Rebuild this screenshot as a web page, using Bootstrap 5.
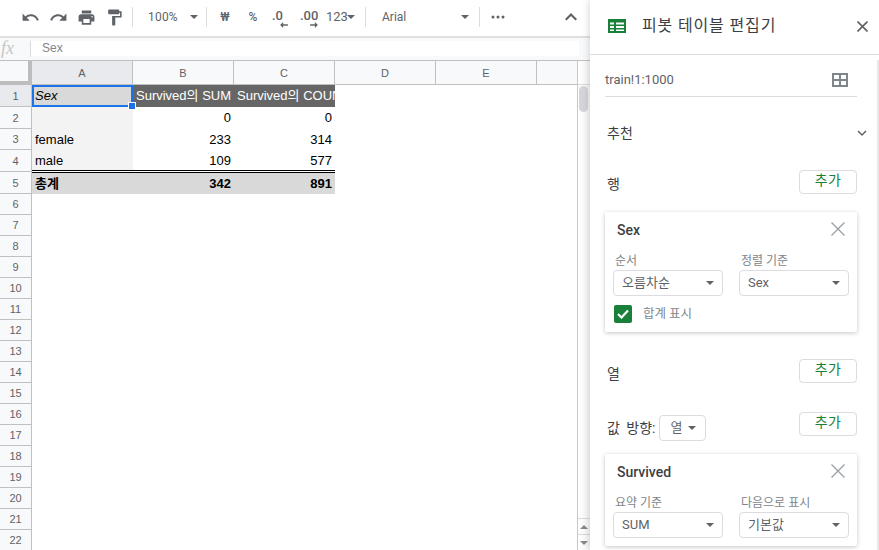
<!DOCTYPE html>
<html lang="ko">
<head>
    <meta charset="UTF-8">
    <meta name="viewport" content="width=device-width, initial-scale=1.0">
    <title>피봇 테이블 편집기</title>
    <link href="https://cdn.jsdelivr.net/npm/bootstrap@5.3.0/dist/css/bootstrap.min.css" rel="stylesheet">
    <style>
        html, body { height: 550px; overflow: hidden; }
        body { font-family: Roboto, "Noto Sans CJK KR", sans-serif; background: #fff; color: #3c4043; }

        /* left side: toolbar, formula bar, grid */
        .sheet-side { width: 590px; height: 550px; position: relative; flex: none; }
        .tool-bar { height: 38px; border-bottom: 2px solid #e0e0e0; padding: 0 0 2px 20px; font-size: 12px; color: #5f6368; }
        .tool-bar svg { fill: #5f6368; display: block; }
        .tool-btn { width: 28px; display: flex; justify-content: center; }
        .tool-sep { width: 1px; height: 20px; background: #dadce0; flex: none; }
        .caret-down { width: 0; height: 0; border-left: 4px solid transparent; border-right: 4px solid transparent; border-top: 4px solid #5f6368; flex: none; }
        .zoom-val { width: 57px; padding-left: 15px; letter-spacing: .2px; }
        .money-val { width: 26px; text-align: center; font-weight: 500; }
        .dec-btn { font-size: 13px; line-height: 18px; position: relative; height: 20px; }
        .num-fmt { width: 21px; font-size: 13px; }
        .font-name { width: 95px; padding-left: 16px; }
        .hide-up { position: absolute; left: 565px; top: 13px; }

        .formula-bar { height: 23px; background: #f8f9fa; padding: 3px 11px 3px 0; border-bottom: 1px solid #c0c0c0; }
        .fx-mark { width: 31px; padding-left: 1px; font-family: "Liberation Serif", serif; font-style: italic; font-size: 18px; line-height: 15px; color: #c4c7c5; border-right: 1px solid #dadce0; height: 16px; flex: none; }
        .formula-text { background: #fff; flex-grow: 1; height: 15px; padding-left: 11px; font-family: "Liberation Sans", sans-serif; font-size: 12px; line-height: 15px; color: #80868b; }

        .grid-wrap { width: 577px; height: 489px; overflow: hidden; position: relative; }
        .sheet-grid { table-layout: fixed; width: 600px; border-collapse: separate; border-spacing: 0; font-family: "Liberation Sans", "Noto Sans CJK KR", sans-serif; font-size: 13px; color: #000; }
        .sheet-grid th, .sheet-grid td { padding: 0 3px; white-space: nowrap; overflow: hidden; line-height: 16px; }
        .sheet-grid thead th { height: 24px; background: #f8f9fa; border-right: 1px solid #c0c0c0; border-bottom: 1px solid #c0c0c0; font-size: 11px; font-weight: 400; color: #5f6368; text-align: center; }
        .sheet-grid tbody th { background: #f8f9fa; border-right: 1px solid #c0c0c0; border-bottom: 1px solid #c0c0c0; font-size: 11px; font-weight: 400; color: #5f6368; text-align: center; padding: 0; }
        .sheet-grid tbody tr { height: 21px; }
        .sheet-grid tbody tr.tall-row { height: 22px; }
        .sheet-grid thead th.corner-cell { background: #f8f9fa; border-right: 4px solid #bdbdbd; border-bottom: 4px solid #bdbdbd; }
        .sheet-grid thead th.col-on, .sheet-grid tbody th.row-on { background: #e8eaed; }
        .pivot-head { background: #666; color: #fff; }
        .pivot-side { background: #f3f3f3; }
        .pivot-sel { background: #d9d9d9; font-style: italic; outline: 2px solid #1a73e8; outline-offset: -2px; }
        /* 총계 위 이중선: 4행 아래 + 5행 위 */
        .pivot-above td { box-shadow: inset 0 -1px #fff, inset 0 -2px #000; }
        .pivot-total td { background: #d9d9d9; font-weight: 700; border-top: 1px solid #000; }
        .sel-handle { position: absolute; left: 128px; top: 41px; width: 6px; height: 6px; background: #1a73e8; border: 1px solid #fff; box-sizing: content-box; }

        .v-scroll { position: absolute; right: 0; top: 61px; width: 13px; height: 489px; background: linear-gradient(90deg, #fff, #f4f4f4); border-left: 1px solid #c8c8c8; }
        .v-top { height: 24px; border-bottom: 1px solid #d8d8d8; }
        .v-thumb { width: 9px; height: 26px; margin: 1px 0 0 1px; background: #d3d5da; border-radius: 5px; }
        .v-end { height: 16px; border-top: 1px solid #d8d8d8; display: flex; align-items: center; justify-content: center; }
        .caret-up { width: 0; height: 0; border-left: 4px solid transparent; border-right: 4px solid transparent; border-bottom: 4px solid #888; }
        .v-end .caret-down { border-top-color: #888; }

        /* right side: pivot editor */
        .pivot-panel { width: 289px; height: 550px; flex: none; position: relative; box-shadow: -2px 0 6px rgba(0, 0, 0, .12); background: #fff; }
        .panel-head { height: 55px; border-bottom: 1px solid #dadce0; padding: 0 0 2px 18px; }
        .panel-title { font-size: 16px; letter-spacing: .85px; color: #3c4043; margin-left: 16px; }
        .panel-close { position: absolute; left: 267px; top: 21px; }
        .panel-body { padding: 0 22px 0 15px; height: 495px; overflow: hidden; }
        .panel-rail { position: absolute; right: 0; top: 60px; width: 2px; height: 490px; background: #e8e8e8; }
        .range-row { height: 42px; margin-bottom: 24px; padding: 9px 9px 0 0; border-bottom: 1px solid #dadce0; font-size: 13px; color: #5f6368; }
        .sect-title { font-size: 14px; color: #3c4043; padding-left: 2px; }
        .sect-head { height: 24px; margin-bottom: 25px; }
        .dir-label { word-spacing: 3px; }
        .btn.add-btn { width: 58px; height: 24px; padding: 0 0 4px; font-size: 14px; line-height: 17px; letter-spacing: .4px; color: #188038; background: #fff; border: 1px solid #dadce0; border-radius: 4px; }
        .pivot-card { border: 0; border-radius: 2px; box-shadow: 0 1px 4px rgba(60, 64, 67, .3); padding: 8px 8px 0; }
        .card-name { font-size: 14px; font-weight: 500; color: #3c4043; padding-left: 4px; height: 22px; line-height: 21px; }
        .card-x { margin: 0 4px 4px 0; }
        .field-label { font-size: 12px; color: #80868b; line-height: 14px; margin-top: 12px; margin-bottom: 2px; padding-left: 2px; }
        .sel-box { height: 26px; border: 1px solid #dadce0; border-radius: 4px; font-size: 13px; padding: 0 8px; color: #5f6368; background: #fff; }
        .sel-wide { width: 110px; }
        .sel-small { width: 47px; margin-left: 3px; margin-top: 3px; padding: 0 9px 0 11px; }
        .gap-fields { gap: 16px; }
        .check-row { margin-top: 9px; }
        .check-mark { width: 18px; height: 18px; background: #188038; border-radius: 2px; margin-left: 1px; }
        .check-label { font-size: 12.5px; color: #80868b; margin-left: 11px; }
    </style>
</head>
<body>
<div class="d-flex">
    <div class="sheet-side">
        <!-- 상단 툴바 -->
        <div class="tool-bar d-flex align-items-center">
            <div class="tool-btn" style="margin-left:-4px"><svg width="19" height="19" viewBox="0 0 24 24"><path d="M12.5 8c-2.65 0-5.05.99-6.9 2.6L2 7v9h9l-3.62-3.62c1.39-1.16 3.16-1.88 5.12-1.88 3.54 0 6.55 2.31 7.6 5.5l2.37-.78C21.08 11.03 17.15 8 12.5 8z"/></svg></div>
            <div class="tool-btn"><svg width="19" height="19" viewBox="0 0 24 24"><path d="M18.4 10.6C16.55 8.99 14.15 8 11.5 8c-4.65 0-8.58 3.03-9.96 7.22L3.9 16c1.05-3.19 4.05-5.5 7.6-5.5 1.95 0 3.73.72 5.12 1.88L13 16h9V7l-3.6 3.6z"/></svg></div>
            <div class="tool-btn"><svg width="19" height="19" viewBox="0 0 24 24"><path d="M19 8H5c-1.66 0-3 1.34-3 3v6h4v4h12v-4h4v-6c0-1.66-1.34-3-3-3zm-3 11H8v-5h8v5zm3-7c-.55 0-1-.45-1-1s.45-1 1-1 1 .45 1 1-.45 1-1 1zm-1-9H6v4h12V3z"/></svg></div>
            <div class="tool-btn"><svg width="19" height="19" viewBox="0 0 24 24"><path d="M18 4V3c0-.55-.45-1-1-1H5c-.55 0-1 .45-1 1v4c0 .55.45 1 1 1h12c.55 0 1-.45 1-1V6h1v4H9v11c0 .55.45 1 1 1h2c.55 0 1-.45 1-1v-9h8V4h-3z"/></svg></div>
            <div class="tool-sep ms-1"></div>
            <div class="zoom-val">100%</div>
            <div class="caret-down"></div>
            <div class="tool-sep" style="margin-left:8px"></div>
            <div class="money-val" style="margin-left:5px">₩</div>
            <div class="money-val" style="margin-left:2px">%</div>
            <div class="dec-btn" style="margin-left:6px;width:28px"><b class="fw-medium">.0</b>
                <svg class="position-absolute" style="left:8px;top:15px" width="8" height="6" viewBox="0 0 9 7"><path d="M3.500 0v2.500H9v2H3.500V7L0 3.500z"/></svg></div>
            <div class="dec-btn" style="width:26px"><b class="fw-medium">.00</b>
                <svg class="position-absolute" style="left:10px;top:15px" width="8" height="6" viewBox="0 0 9 7"><path d="M5.500 0v2.500H0v2h5.500V7L9 3.500z"/></svg></div>
            <div class="num-fmt">123</div>
            <div class="caret-down"></div>
            <div class="tool-sep" style="margin-left:10px"></div>
            <div class="font-name">Arial</div>
            <div class="caret-down" style="margin-right:10px"></div>
            <div class="tool-sep"></div>
            <svg style="margin-left:11px" width="14" height="4" viewBox="0 0 14 4"><circle cx="2" cy="2" r="1.500"/><circle cx="7" cy="2" r="1.500"/><circle cx="12" cy="2" r="1.500"/></svg>
            <svg class="hide-up" width="12" height="8" viewBox="0 0 12 8"><path d="M6 0 12 6 10.500 7.500 6 3 1.500 7.500 0 6z"/></svg>
        </div>

        <!-- 수식 입력줄 -->
        <div class="formula-bar d-flex">
            <div class="fx-mark">fx</div>
            <div class="formula-text">Sex</div>
        </div>

        <!-- 시트 -->
        <div class="grid-wrap">
            <table class="sheet-grid">
                <colgroup><col style="width:32px"><col style="width:101px"><col style="width:101px"><col style="width:101px"><col style="width:101px"><col style="width:101px"><col style="width:63px"></colgroup>
                <thead>
                    <tr><th class="corner-cell"></th><th class="col-on">A</th><th>B</th><th>C</th><th>D</th><th>E</th><th></th></tr>
                </thead>
                <tbody>
                    <tr class="tall-row"><th class="row-on">1</th><td class="pivot-sel">Sex</td><td class="pivot-head">Survived의 SUM</td><td class="pivot-head">Survived의 COUNT</td></tr>
                    <tr class="tall-row"><th>2</th><td class="pivot-side"></td><td class="text-end">0</td><td class="text-end">0</td></tr>
                    <tr><th>3</th><td class="pivot-side">female</td><td class="text-end">233</td><td class="text-end">314</td></tr>
                    <tr class="pivot-above tall-row"><th>4</th><td class="pivot-side">male</td><td class="text-end">109</td><td class="text-end">577</td></tr>
                    <tr class="pivot-total tall-row"><th>5</th><td>총계</td><td class="text-end">342</td><td class="text-end">891</td></tr>
                    <tr><th>6</th></tr><tr><th>7</th></tr><tr><th>8</th></tr><tr><th>9</th></tr>
                    <tr><th>10</th></tr><tr><th>11</th></tr><tr><th>12</th></tr><tr><th>13</th></tr>
                    <tr><th>14</th></tr><tr><th>15</th></tr><tr><th>16</th></tr><tr><th>17</th></tr>
                    <tr><th>18</th></tr><tr><th>19</th></tr><tr><th>20</th></tr><tr><th>21</th></tr><tr><th>22</th></tr>
                </tbody>
            </table>
            <div class="sel-handle"></div>
        </div>

        <div class="v-scroll d-flex flex-column">
            <div class="v-top"></div>
            <div class="v-thumb"></div>
            <div class="flex-grow-1"></div>
            <div class="v-end"><div class="caret-up"></div></div>
            <div class="v-end"><div class="caret-down"></div></div>
        </div>
    </div>

    <!-- 피봇 테이블 편집기 -->
    <div class="pivot-panel">
        <div class="panel-head d-flex align-items-center">
            <svg width="18" height="14" viewBox="0 0 18 14"><path fill="#188038" fill-rule="evenodd" d="M0 0h18v14H0zM2 3.500v2h4v-2zm6 0v2h8v-2zM2 7v2h4V7zm6 0v2h8V7zM2 10.500v1.500h4v-1.500zm6 0v1.500h8v-1.500z"/></svg>
            <div class="panel-title">피봇 테이블 편집기</div>
            <svg class="panel-close" width="11" height="11" viewBox="0 0 11 11"><path stroke="#5f6368" stroke-width="1.600" d="M.5.500l10 10M10.500.500l-10 10"/></svg>
        </div>
        <div class="panel-body">
            <div class="range-row d-flex align-items-center justify-content-between">
                <span>train!1:1000</span>
                <svg width="16" height="14" viewBox="0 0 16 14"><path fill="none" stroke="#80868b" stroke-width="2" d="M1 1h14v12H1zM8 1v12M1 7h14"/></svg>
            </div>

            <div class="sect-title sect-head d-flex justify-content-between align-items-center">
                <span>추천</span>
                <svg style="margin-right:-10px" width="10" height="7" viewBox="0 0 10 7"><path fill="none" stroke="#5f6368" stroke-width="1.500" d="M1 1l4 4 4-4"/></svg>
            </div>

            <div class="d-flex justify-content-between align-items-start" style="height:42px">
                <span class="sect-title" style="margin-top:4px">행</span>
                <button type="button" class="btn add-btn">추가</button>
            </div>
            <div class="card pivot-card" style="height:120px;margin-bottom:27px">
                <div class="d-flex justify-content-between align-items-center">
                    <div class="card-name">Sex</div>
                    <svg class="card-x" width="14" height="14" viewBox="0 0 14 14"><path stroke="#9aa0a6" stroke-width="1.300" d="M.5.500l13 13M13.500.500l-13 13"/></svg>
                </div>
                <div class="d-flex gap-fields">
                    <div><div class="field-label">순서</div><div class="sel-box sel-wide d-flex align-items-center justify-content-between"><span>오름차순</span><span class="caret-down"></span></div></div>
                    <div><div class="field-label">정렬 기준</div><div class="sel-box sel-wide d-flex align-items-center justify-content-between"><span>Sex</span><span class="caret-down"></span></div></div>
                </div>
                <div class="check-row d-flex align-items-center">
                    <div class="check-mark d-flex align-items-center justify-content-center"><svg width="12" height="10" viewBox="0 0 12 10"><path fill="none" stroke="#fff" stroke-width="2.200" d="M1 5l3.500 3.500L11 1.500"/></svg></div>
                    <div class="check-label">합계 표시</div>
                </div>
            </div>

            <div class="d-flex justify-content-between align-items-start" style="height:53px">
                <span class="sect-title" style="margin-top:5px">열</span>
                <button type="button" class="btn add-btn">추가</button>
            </div>

            <div class="d-flex justify-content-between align-items-start" style="height:42px">
                <div class="d-flex align-items-center">
                    <span class="sect-title dir-label" style="margin-top:3px">값 방향:</span>
                    <div class="sel-box sel-small d-flex align-items-center justify-content-between"><span>열</span><span class="caret-down"></span></div>
                </div>
                <button type="button" class="btn add-btn">추가</button>
            </div>
            <div class="card pivot-card" style="height:92px">
                <div class="d-flex justify-content-between align-items-center">
                    <div class="card-name">Survived</div>
                    <svg class="card-x" width="14" height="14" viewBox="0 0 14 14"><path stroke="#9aa0a6" stroke-width="1.300" d="M.5.500l13 13M13.500.500l-13 13"/></svg>
                </div>
                <div class="d-flex gap-fields">
                    <div><div class="field-label">요약 기준</div><div class="sel-box sel-wide d-flex align-items-center justify-content-between"><span>SUM</span><span class="caret-down"></span></div></div>
                    <div><div class="field-label">다음으로 표시</div><div class="sel-box sel-wide d-flex align-items-center justify-content-between"><span>기본값</span><span class="caret-down"></span></div></div>
                </div>
            </div>
        </div>
        <div class="panel-rail"></div>
    </div>
</div>
<script src="https://cdn.jsdelivr.net/npm/bootstrap@5.3.0/dist/js/bootstrap.bundle.min.js"></script>
</body>
</html>
